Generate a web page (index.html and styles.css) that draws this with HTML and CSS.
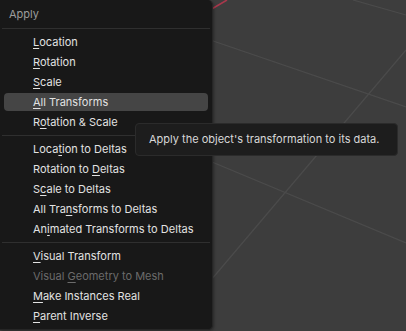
FILE: index.html
```html
<!DOCTYPE html>
<html>

<head>
    <meta charset="UTF-8">
    <title>Apply</title>
    <link rel="stylesheet" href="styles.css">
</head>

<body>
    <div class="viewport">
        <svg class="grid" width="406" height="331" viewBox="0 0 406 331">
            <line x1="200" y1="36.5" x2="406" y2="107" stroke="#4b4b4b" stroke-width="1.2" />
            <line x1="353" y1="0" x2="406" y2="15" stroke="#4b4b4b" stroke-width="1.2" />
            <line x1="200" y1="293" x2="406" y2="50" stroke="#4b4b4b" stroke-width="1.2" />
            <line x1="200" y1="157" x2="406" y2="243" stroke="#4b4b4b" stroke-width="1.2" />
            <line x1="210" y1="10" x2="227" y2="0" stroke="#a8384c" stroke-width="1.6" />
        </svg>

        <div class="menu">
            <div class="menu-title">Apply</div>
            <div class="sep"></div>
            <div class="item"><u>L</u>ocation</div>
            <div class="item"><u>R</u>otation</div>
            <div class="item"><u>S</u>cale</div>
            <div class="item active"><u>A</u>ll Transforms</div>
            <div class="item">R<u>o</u>tation &amp; Scale</div>
            <div class="sep"></div>
            <div class="item">Loca<u>t</u>ion to Deltas</div>
            <div class="item">Rotation to <u>D</u>eltas</div>
            <div class="item">S<u>c</u>ale to Deltas</div>
            <div class="item">All Tra<u>n</u>sforms to Deltas</div>
            <div class="item">An<u>i</u>mated Transforms to Deltas</div>
            <div class="sep"></div>
            <div class="item"><u>V</u>isual Transform</div>
            <div class="item disabled">Visual <u>G</u>eometry to Mesh</div>
            <div class="item"><u>M</u>ake Instances Real</div>
            <div class="item"><u>P</u>arent Inverse</div>
        </div>

        <div class="tooltip">Apply the object's transformation to its data.</div>
    </div>
</body>

</html>
```

FILE: styles.css
```css
body {
    margin: 0;
    font-family: Inter, "Noto Sans", sans-serif;
    font-size: 11px;
    background-color: #3d3d3d;
}

.viewport {
    position: relative;
    width: 406px;
    height: 331px;
    overflow: hidden;
    background-color: #3d3d3d;
}

.grid {
    position: absolute;
    left: 0;
    top: 0;
}

.menu {
    position: relative;
    display: flex;
    flex-direction: column;
    width: 212px;
    height: 329px;
    background-color: #181818;
    border-right: 1px solid #262626;
    border-bottom: 1px solid #262626;
    border-radius: 0 5px 5px 0;
    box-shadow: 1px 1px 3px rgba(0, 0, 0, 0.35);
}

.menu-title {
    height: 28px;
    line-height: 28px;
    padding-left: 9px;
    color: #9c9c9c;
}

.sep {
    flex: none;
    height: 1px;
    margin: 0 2px 3px 2px;
    background-color: #2f2f2f;
}

.item + .sep {
    margin-top: 3px;
}

.item {
    flex: none;
    height: 18px;
    line-height: 18px;
    margin: 1px 4px;
    padding-left: 29px;
    color: #e2e2e2;
    border-radius: 4px;
    white-space: nowrap;
}

.item u {
    text-decoration-thickness: 1px;
    text-underline-offset: 2px;
}

.item.active {
    background-color: #454545;
}

.item.disabled {
    color: #6b6b6b;
}

.tooltip {
    position: absolute;
    left: 135px;
    top: 123px;
    width: 235px;
    height: 31px;
    line-height: 31px;
    padding-left: 13px;
    padding-right: 13px;
    background-color: #1d1d1d;
    border: 1px solid #2b2b2b;
    border-radius: 4px;
    color: #d8d8d8;
    white-space: nowrap;
}
```
